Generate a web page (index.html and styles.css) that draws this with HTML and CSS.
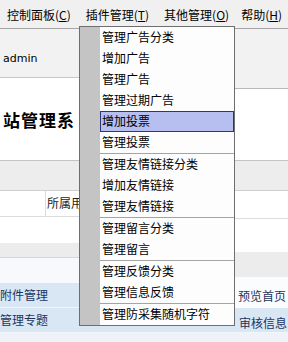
FILE: index.html
```html
<!DOCTYPE html>
<html>
<head>
  <meta http-equiv="content-type" content="text/html; charset=UTF-8">
  <title>网站管理系统</title>
  <link rel="stylesheet" href="styles.css">
</head>
<body>
<div class="page">
  <div class="menubar">
    <span class="mb-item">控制面板(<u>C</u>)</span>
    <span class="mb-item">插件管理(<u>T</u>)</span>
    <span class="mb-item">其他管理(<u>O</u>)</span>
    <span class="mb-item help">帮助(<u>H</u>)</span>
  </div>

  <div class="frames">
    <div class="left">
      <div class="l-head">admin</div>
      <div class="l-title">站管理系</div>
      <div class="band"></div>
      <div class="l-row"><div class="cell"></div><div class="cell-text">所属用户组</div></div>
      <div class="l-blank"></div>
      <div class="l-band"></div>
      <div class="l-gap"></div>
      <div class="link-row">附件管理</div>
      <div class="link-row">管理专题</div>
      <div class="pale"></div>
    </div>
    <div class="right">
      <div class="r-head"></div>
      <div class="r-white"></div>
      <div class="band"></div>
      <div class="r-row"></div>
      <div class="r-blank"></div>
      <div class="r-band"></div>
      <div class="r-link1">预览首页</div>
      <div class="r-link2">审核信息</div>
      <div class="pale"></div>
    </div>
  </div>

  <div class="dropdown">
    <div class="mi">管理广告分类</div>
    <div class="mi">增加广告</div>
    <div class="mi">管理广告</div>
    <div class="mi">管理过期广告</div>
    <div class="mi active">增加投票</div>
    <div class="mi">管理投票</div>
    <div class="sep"></div>
    <div class="mi">管理友情链接分类</div>
    <div class="mi">增加友情链接</div>
    <div class="mi">管理友情链接</div>
    <div class="sep"></div>
    <div class="mi">管理留言分类</div>
    <div class="mi">管理留言</div>
    <div class="sep"></div>
    <div class="mi">管理反馈分类</div>
    <div class="mi">管理信息反馈</div>
    <div class="sep"></div>
    <div class="mi">管理防采集随机字符</div>
  </div>
</div>
</body>
</html>
```

FILE: styles.css
```css
body {
	margin: 0px;
	padding: 0px;
	background-color: white;
	font-family: "Noto Sans CJK SC", "DejaVu Sans", sans-serif;
	font-size: 12px;
	color: #000;
}
.page {
	position: relative;
	width: 288px;
	height: 342px;
	overflow: hidden;
	display: flex;
	flex-direction: column;
}

/* top menu bar */
.menubar {
	height: 28px;
	line-height: 28px;
	background-color: #f0f0f0;
	border-bottom: 1px solid #a6a6a6;
	display: flex;
	gap: 15px;
	padding-left: 7px;
	white-space: nowrap;
}
.mb-item { padding-top: 1px; }
.help { margin-left: -3px; }

.frames {
	display: flex;
	flex: 1;
}
.left {
	width: 234px;
	display: flex;
	flex-direction: column;
}
.right {
	flex: 1;
	display: flex;
	flex-direction: column;
	white-space: nowrap;
}

.band {
	height: 29px;
	background-color: #ededed;
	border-bottom: 1px solid #cfcfcf;
}

/* left frame */
.l-head {
	height: 49px;
	box-sizing: border-box;
	background-color: #f2f2f2;
	border-bottom: 1px solid #c8c8c8;
	font-family: "DejaVu Sans", sans-serif;
	font-size: 11px;
	line-height: 13px;
	padding-top: 23px;
	padding-left: 3px;
}
.l-title {
	height: 83px;
	box-sizing: border-box;
	padding-top: 31px;
	padding-left: 3px;
	line-height: 22px;
	font-size: 17px;
	font-weight: bold;
	letter-spacing: 1px;
	border-bottom: 1px solid #c4c4c4;
	white-space: nowrap;
}
.l-row {
	display: flex;
	height: 25px;
	border-bottom: 1px solid #dcdcdc;
}
.cell {
	width: 45px;
	border-right: 1px solid #dcdcdc;
}
.cell-text {
	padding-left: 1px;
	line-height: 23px;
	color: #222;
	white-space: nowrap;
}
.l-blank { height: 26px; }
.l-band {
	height: 14px;
	background-color: #ececec;
	border-bottom: 1px solid #d6d6d6;
}
.l-gap { height: 25px; background-color: #f7f9fc; }
.link-row {
	height: 24px;
	line-height: 24px;
	background-color: #d9e6f3;
	border-bottom: 1px solid #f2f6fb;
	color: #1b3560;
	white-space: nowrap;
}
.pale {
	flex: 1;
	background-color: #eef3f9;
}

/* right frame */
.r-head {
	height: 59px;
	background-color: #f2f2f2;
	border-bottom: 1px solid #b8b8b8;
}
.r-white {
	height: 71px;
	border-bottom: 1px solid #c4c4c4;
}
.r-row {
	height: 27px;
	border-bottom: 1px solid #dcdcdc;
}
.r-blank { height: 33px; }
.r-band {
	height: 25px;
	background-color: #ececec;
}
.r-link1 {
	height: 31px;
	box-sizing: border-box;
	padding-top: 10px;
	padding-left: 4px;
	line-height: 18px;
	color: #1b3560;
	background-color: #fbfcfd;
}
.r-link2 {
	height: 25px;
	box-sizing: border-box;
	padding-top: 4px;
	padding-left: 5px;
	line-height: 22px;
	color: #1b3560;
	background-color: #d9e6f3;
	border-bottom: 1px solid #f2f6fb;
}

/* dropdown menu */
.dropdown {
	position: absolute;
	left: 79px;
	top: 26px;
	width: 154px;
	border: 1px solid #6e6e6e;
	background: linear-gradient(to right, #c4c4c4 20px, #fdfdfd 20px);
	white-space: nowrap;
}
.mi {
	margin-left: 20px;
	padding-left: 2px;
	height: 21px;
	line-height: 20px;
	box-sizing: border-box;
}
.mi.active {
	background-color: #b7bef0;
	border: 1px solid #2f3480;
	padding-left: 1px;
	line-height: 18px;
}
.sep {
	margin-left: 20px;
	height: 1px;
	background-color: #a4a4a4;
}
```
